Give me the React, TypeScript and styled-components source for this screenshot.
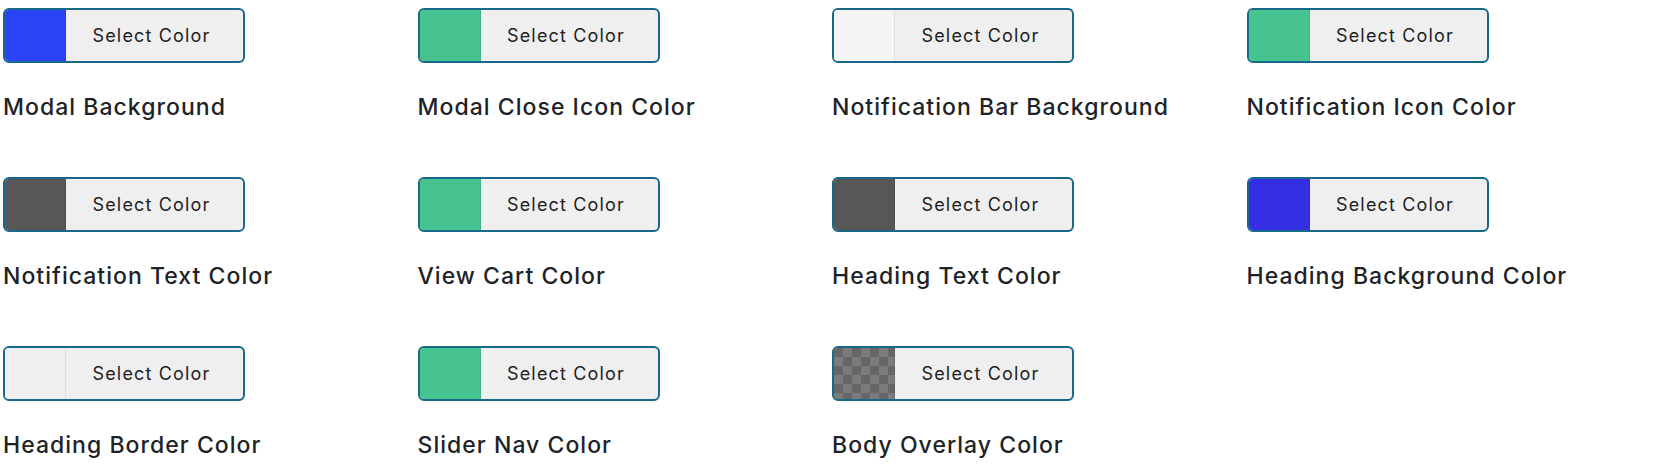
import React from "react"
import styled, { createGlobalStyle } from "styled-components"

const GlobalStyle = createGlobalStyle`
  html, body {
    margin: 0;
    padding: 0;
    background: #ffffff;
  }
  body {
    font-family: Inter, "Noto Sans", "Liberation Sans", sans-serif;
    color: #1d2327;
  }
`

const Grid = styled.div`
  display: grid;
  grid-template-columns: repeat(4, 414.5px);
  row-gap: 55px;
  padding: 8px 0 0 3px;
`

const Field = styled.div`
  display: flex;
  flex-direction: column;
  align-items: flex-start;
`

const PickerButton = styled.button`
  display: flex;
  align-items: stretch;
  width: 242px;
  height: 55px;
  padding: 0;
  margin: 0;
  border: 2px solid #17698a;
  border-radius: 6px;
  background: #efefef;
  overflow: hidden;
  cursor: pointer;
`

const Swatch = styled.span<{ $color: string; $checker?: boolean }>`
  width: 60px;
  flex: none;
  background-color: ${(p) => p.$color};
  border-right: 1px solid rgba(0, 0, 0, 0.08);
  ${(p) =>
    p.$checker &&
    `
    background-image:
      linear-gradient(45deg, #7b7b7b 25%, transparent 25%, transparent 75%, #7b7b7b 75%),
      linear-gradient(45deg, #7b7b7b 25%, transparent 25%, transparent 75%, #7b7b7b 75%);
    background-size: 18px 18px;
    background-position: 0 0, 9px 9px;
  `}
`

const ButtonText = styled.span`
  flex: 1;
  display: flex;
  align-items: center;
  justify-content: center;
  padding-right: 6px;
  font-family: Inter, "Noto Sans", "Liberation Sans", sans-serif;
  font-size: 18px;
  letter-spacing: 0.065em;
  color: #1e1e1e;
`

const Label = styled.div`
  margin-top: 29px;
  font-size: 23px;
  line-height: 30px;
  font-weight: 500;
  letter-spacing: 0.045em;
  color: #1d2327;
  white-space: nowrap;
`

type Item = { label: string; color: string; checker?: boolean }

const items: Item[] = [
  { label: "Modal Background", color: "#2944f5" },
  { label: "Modal Close Icon Color", color: "#47c38f" },
  { label: "Notification Bar Background", color: "#f5f5f5" },
  { label: "Notification Icon Color", color: "#47c38f" },
  { label: "Notification Text Color", color: "#575757" },
  { label: "View Cart Color", color: "#47c38f" },
  { label: "Heading Text Color", color: "#575757" },
  { label: "Heading Background Color", color: "#342fe2" },
  { label: "Heading Border Color", color: "#f0f0f0" },
  { label: "Slider Nav Color", color: "#47c38f" },
  { label: "Body Overlay Color", color: "#666666", checker: true },
]

export default function App() {
  return (
    <>
      <GlobalStyle />
      <Grid>
        {items.map((item) => (
          <Field key={item.label}>
            <PickerButton type="button">
              <Swatch $color={item.color} $checker={item.checker} />
              <ButtonText>Select Color</ButtonText>
            </PickerButton>
            <Label>{item.label}</Label>
          </Field>
        ))}
      </Grid>
    </>
  )
}
